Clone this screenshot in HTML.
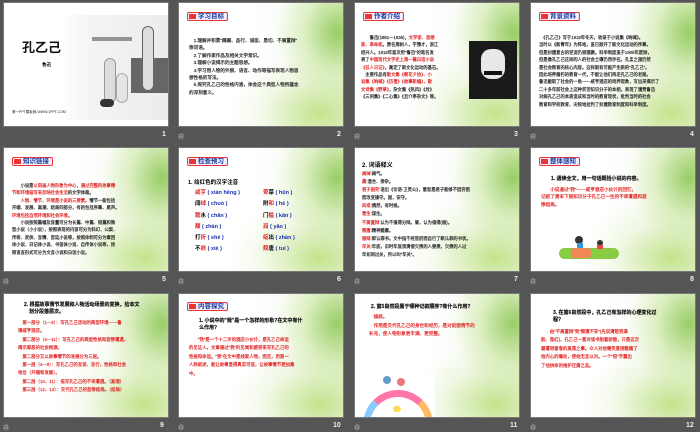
<!DOCTYPE html>
<html><head><meta charset="utf-8"><style>
*{margin:0;padding:0;box-sizing:border-box}
body{width:700px;height:431px;background:#555;position:relative;overflow:hidden;font-family:"Liberation Sans","Noto Sans CJK SC",sans-serif}
.s{position:absolute;width:166px;height:125px;background:#fff;overflow:hidden;border:1px solid #777}
.g{position:absolute;inset:0;background:radial-gradient(ellipse 60px 70px at 158px 30px,rgba(130,195,70,.8),rgba(190,225,140,.45) 55%,rgba(255,255,255,0) 100%),radial-gradient(ellipse 90px 60px at 140px 110px,rgba(180,220,110,.75),rgba(220,238,190,.35) 60%,rgba(255,255,255,0) 100%),linear-gradient(90deg,rgba(255,255,255,0) 45%,rgba(225,240,205,.5))}
.n{position:absolute;color:#eee;font-size:7px;font-weight:bold}
.ic{position:absolute;color:#ccc;font-size:6px}
.t{position:absolute;font-size:4.6px;line-height:7.4px;color:#222;white-space:nowrap;-webkit-text-stroke:.15px currentColor}
.r{color:#e02020}
.b{color:#1a2fb0;font-weight:bold}
.hd{position:absolute;left:8px;top:9px;height:9px;border:1px solid #e33;border-radius:2px;background:#eef;font-size:6.5px;line-height:7px;font-weight:bold;color:#1a3a9a;padding:0 3px 0 10px}
.hd:before{content:"";position:absolute;left:1px;top:1px;width:7px;height:5px;background:#e33}
.bt{font-weight:bold;color:#111;font-size:5px}
</style></head><body>

<!-- 1 -->
<div class="s" style="left:3px;top:2px">
<div style="position:absolute;left:55px;top:12px;width:110px;height:105px;background:linear-gradient(90deg,#fff,#f3f3f3 30%,#ececec)"></div>
<div style="position:absolute;left:127px;top:55px;width:38px;height:35px;background:#444;opacity:.8"></div>
<div style="position:absolute;left:138px;top:23px;width:12px;height:65px;background:#ddd;border:1px solid #666;border-radius:6px"></div>
<div style="position:absolute;left:88px;top:34px;width:40px;height:4px;background:#555;opacity:.6"></div>
<div style="position:absolute;left:100px;top:55px;width:12px;height:45px;background:#ddd;border:1px solid #999;border-radius:6px"></div>
<div style="position:absolute;left:112px;top:70px;width:12px;height:30px;background:#e5e5e5;border:1px solid #aaa;border-radius:6px"></div>
<div style="position:absolute;left:96px;top:96px;width:14px;height:8px;background:#333;border-radius:4px"></div>
<div style="position:absolute;left:18px;top:34px;font-size:13px;font-weight:bold;color:#111">孔乙己</div>
<div style="position:absolute;left:38px;top:59px;font-size:4.5px;font-weight:bold">鲁迅</div>
<div style="position:absolute;left:8px;top:107px;font-size:3.5px;color:#222">第一PPT模板网-WWW.1PPT.COM</div>
</div>
<div class="n" style="left:162px;top:131px">1</div>

<!-- 2 -->
<div class="s" style="left:178px;top:2px"><div class="g"></div>
<div class="hd">学习目标</div>
<div class="t" style="left:10px;top:34px">　1.理解并积累"蹒跚、品行、诚信、恳切、不屑置辩"<br>等词语。<br>　2.了解作家作品及相关文学常识。<br>　3.理解小说揭示的主题思想。<br>　4.学习用人物的外貌、语言、动作等描写表现人物思<br>想性格的写法。<br>　5.探究孔乙己的性格内涵，体会这个典型人物所蕴含<br>的深刻意义。</div>
</div>
<div class="ic" style="left:178px;top:132px">㊞</div><div class="n" style="left:337px;top:131px">2</div>

<!-- 3 -->
<div class="s" style="left:354px;top:2px"><div class="g"></div>
<div class="hd">作者介绍</div>
<div style="position:absolute;left:114px;top:38px;width:48px;height:58px;background:#1a1a1a"><div style="position:absolute;left:12px;top:8px;width:24px;height:30px;background:#e8e8e8;border-radius:10px"></div><div style="position:absolute;left:15px;top:30px;width:18px;height:4px;background:#111"></div></div>
<div class="t" style="left:6px;top:31px;font-size:4.3px">　　鲁迅(1881—1936)，<span class="r">文学家、思想</span><br><span class="r">家、革命家</span>。原名周树人，字豫才，浙江<br>绍兴人。1918年首次用"鲁迅"的笔名发<br>表了<span class="r">中国现代文学史上第一篇白话小说</span><br><span class="r">《狂人日记》</span>，奠定了新文化运动的基石。<br>　主要作品有<span class="r">散文集《朝花夕拾》、小</span><br><span class="r">说集《呐喊》《彷徨》《故事新编》，散</span><br><span class="r">文诗集《野草》</span>，杂文集《热风》《坟》<br>《三闲集》《二心集》《且介亭杂文》等。</div>
</div>
<div class="ic" style="left:354px;top:132px">㊞</div><div class="n" style="left:514px;top:131px">3</div>

<!-- 4 -->
<div class="s" style="left:530px;top:2px"><div class="g"></div>
<div class="hd">背景资料</div>
<div class="t" style="left:8px;top:31px;font-size:4.3px">　《孔乙己》写于1918年冬天，收录于小说集《呐喊》。<br>当时以《新青年》为阵地，虽已掀开了新文化运动的序幕，<br>但是封建复古的逆流仍很猖獗。科举制度虽于1905年废除，<br>但是像孔乙己这样的人的社会土壤仍然存在。孔孟之道仍然<br>是社会教育的核心内容。这样就有可能产生新的"孔乙己"。<br>因此培养腐朽的教育一代，不能让他们再走孔乙己的老路。<br>鲁迅截取了社会的一角——咸亨酒店的戏弄现象，写出来揭示了<br>二十多年前社会上这种贫苦知识分子的本相，表现了谴责鲁迅<br>对病孔乙己的本质造成和当时的教育现状，批判当时的社会<br>教育和学校教育，尖锐地批判了封建教育制度和科举制度。</div>
</div>
<div class="ic" style="left:530px;top:132px">㊞</div><div class="n" style="left:690px;top:131px">4</div>

<!-- 5 -->
<div class="s" style="left:3px;top:147px"><div class="g"></div>
<div class="hd">知识链接</div>
<div class="t" style="left:8px;top:34px;font-size:4.3px">　　小说是<span class="r">以刻画人物形象为中心，通过完整的故事情</span><br><span class="r">节和环境描写来反映社会生活</span>的文学体裁。<br>　　<span class="r">人物、情节、环境是小说的三要素。</span>情节一般包括<br>开端、发展、高潮、结局四部分，有的包括序幕、尾声。<br><span class="r">环境包括自然环境和社会环境。</span><br>　　小说按照篇幅及容量可分为长篇、中篇、短篇和微<br>型小说（小小说），按照表现的内容可分为科幻、公案、<br>传奇、武侠、言情、宫廷小说等，按照体制可分为章回<br>体小说、日记体小说、书信体小说、自传体小说等，按<br>照语言形式可分为文言小说和白话小说。</div>
</div>
<div class="ic" style="left:3px;top:277px">㊞</div><div class="n" style="left:162px;top:276px">5</div>

<!-- 6 -->
<div class="s" style="left:178px;top:147px"><div class="g"></div>
<div class="hd">检查预习</div>
<div style="position:absolute;left:9px;top:30px;font-size:5.5px;font-weight:bold">1. 给红色的汉字注音</div>
<div style="position:absolute;left:16px;top:40px;font-size:5.5px;line-height:11.3px;font-weight:bold;white-space:nowrap">
<span class="r">咸亨</span> <span class="b">( xián hēng )</span><br>阔<span class="r">绰</span> <span class="b">( chuò )</span><br><span class="r">踱</span>水 <span class="b">( chǎn )</span><br><span class="r">蘸</span> <span class="b">( zhàn )</span><br>打<span class="r">折</span> <span class="b">( shé )</span><br>不<span class="r">屑</span> <span class="b">( xiè )</span></div>
<div style="position:absolute;left:84px;top:40px;font-size:5.5px;line-height:11.3px;font-weight:bold;white-space:nowrap">
<span class="r">荤</span>菜 <span class="b">( hūn )</span><br>附<span class="r">和</span> <span class="b">( hè )</span><br>门<span class="r">槛</span> <span class="b">( kǎn )</span><br><span class="r">舀</span> <span class="b">( yǎo )</span><br><span class="r">绽</span>出 <span class="b">( zhàn )</span><br><span class="r">颓</span>唐 <span class="b">( tuí )</span></div>
</div>
<div class="ic" style="left:178px;top:277px">㊞</div><div class="n" style="left:337px;top:276px">6</div>

<!-- 7 -->
<div class="s" style="left:354px;top:147px"><div class="g"></div>
<div style="position:absolute;left:7px;top:12px;font-size:6px;font-weight:bold">2. 词语释义</div>
<div class="t" style="left:7px;top:22px;font-size:4.3px;line-height:8.1px"><span class="r">阔绰</span>:阔气。<br><span class="r">羼</span>:混合、掺杂。<br><span class="r">君子固穷</span>:语出《论语·卫灵公》，意思是君子能够不因穷困<br>而改变操守。固，安守。<br><span class="r">间或</span>:偶然，有时候。<br><span class="r">营生</span>:谋生。<br><span class="r">不屑置辩</span>:认为不值得分辩。屑，认为值得(做)。<br><span class="r">颓唐</span>:精神萎靡。<br><span class="r">服辩</span>:即认罪书。文中指不经官府而自行了断认罪的书状。<br><span class="r">年关</span>:年底，旧时年底须清偿欠债的人要债，欠债的人过<br>年如同过关，所以叫"年关"。</div>
</div>
<div class="ic" style="left:354px;top:277px">㊞</div><div class="n" style="left:514px;top:276px">7</div>

<!-- 8 -->
<div class="s" style="left:530px;top:147px"><div class="g"></div>
<div class="hd">整体感知</div>
<div class="t bt" style="left:20px;top:28px">1. 通读全文，用一句话概括小说的内容。</div>
<div class="t r" style="left:10px;top:38px">　　小说通过"我"——咸亨酒店小伙计的回忆，<br>记叙了清末下层知识分子孔乙己一生的不幸遭遇和悲<br>惨结局。</div>
<div style="position:absolute;left:28px;top:100px;width:60px;height:11px;background:#8c4;border-radius:6px"></div>
<div style="position:absolute;left:40px;top:100px;width:20px;height:10px;background:#e85;border-radius:3px"></div>
<div style="position:absolute;left:44px;top:88px;width:8px;height:8px;background:#333;border-radius:50%"></div>
<div style="position:absolute;left:46px;top:95px;width:6px;height:5px;background:#39d"></div>
<div style="position:absolute;left:66px;top:92px;width:6px;height:6px;background:#333;border-radius:50%"></div>
<div style="position:absolute;left:66px;top:97px;width:6px;height:4px;background:#e44"></div>
</div>
<div class="ic" style="left:530px;top:277px">㊞</div><div class="n" style="left:690px;top:276px">8</div>

<!-- 9 -->
<div class="s" style="left:3px;top:293px"><div class="g"></div>
<div class="t bt" style="left:20px;top:8px">2. 根据故事情节发展和人物活动场景的变换，给本文<br>　划分段落层次。</div>
<div class="t r" style="left:14px;top:25px;font-size:4.4px;line-height:8.4px">　第一部分（1—3）：写孔乙己活动的典型环境——鲁<br>镇咸亨酒店。<br>　第二部分（4—11）：写孔乙己的典型性格和悲惨遭遇，<br>揭示罪恶的社会根源。<br>　第二部分又以故事情节的发展分为三层。<br>　第一层（4—9）：写孔乙己的言谈、言行，性格和社会<br>地位（开端和发展）。<br>　第二层（10、11）：描写孔乙己的不幸遭遇。（高潮）<br>　第三层（12、13）：交代孔乙己的悲惨结局。（结局）</div>
</div>
<div class="ic" style="left:3px;top:423px">㊞</div><div class="n" style="left:160px;top:422px">9</div>

<!-- 10 -->
<div class="s" style="left:178px;top:293px"><div class="g"></div>
<div class="hd" style="top:8px">内容探究</div>
<div class="t bt" style="left:20px;top:24px">1. 小说中的"我"是一个怎样的形象?在文中有什<br>么作用?</div>
<div class="t r" style="left:10px;top:42px;font-size:4.4px;line-height:8.4px">　　"我"是一个十二岁的酒店小伙计，是孔乙己命运<br>的见证人。文章通过"我"的见闻和感受来写孔乙己的<br>性格和命运。"我"在文中是线索人物，而且，用第一<br>人称叙述，能让故事显得真实可信，让故事情节更加集<br>中。</div>
</div>
<div class="ic" style="left:178px;top:423px">㊞</div><div class="n" style="left:333px;top:422px">10</div>

<!-- 11 -->
<div class="s" style="left:354px;top:293px"><div class="g"></div>
<div class="t bt" style="left:16px;top:10px">2. 第5自然段属于哪种记叙顺序?有什么作用?</div>
<div class="t r" style="left:14px;top:19px;line-height:8.6px">　插叙。<br>　作用是交代孔乙己的身世和经历，是对前面情节的<br>补充，使人物形象更丰满、更完整。</div>
<div style="position:absolute;left:0;top:80px;width:80px;height:45px;background:#fff"></div>
<div style="position:absolute;left:8px;top:96px;width:70px;height:40px;border-radius:35px 35px 0 0;border:7px solid;border-color:#f7a #fb6 transparent #8cf;border-bottom:none"></div>
<div style="position:absolute;left:28px;top:82px;width:8px;height:8px;background:#69c;border-radius:50%"></div>
<div style="position:absolute;left:42px;top:84px;width:8px;height:8px;background:#e77;border-radius:50%"></div>
<div style="position:absolute;left:38px;top:112px;width:8px;height:6px;background:#fd5;border-radius:3px"></div>
</div>
<div class="ic" style="left:354px;top:423px">㊞</div><div class="n" style="left:510px;top:422px">11</div>

<!-- 12 -->
<div class="s" style="left:530px;top:293px"><div class="g"></div>
<div class="t bt" style="left:22px;top:16px">3. 在第6自然段中，孔乙己有怎样的心理变化过<br>程?</div>
<div class="t r" style="left:10px;top:34px;font-size:4.4px;line-height:8.4px">　　由"不屑置辩"到"颓唐不安"(先说清楚到满<br>脸、涨红)，孔乙己一直对读书抱着骄傲，只是这次<br>屡遭同窗者的奚落之事。众人对他嘲笑直接戳痛了<br>他内心的痛处，使他无言以对。一个"窃"字露出<br>了他拼命的维护迂腐之态。</div>
</div>
<div class="ic" style="left:530px;top:423px">㊞</div><div class="n" style="left:686px;top:422px">12</div>

</body></html>
